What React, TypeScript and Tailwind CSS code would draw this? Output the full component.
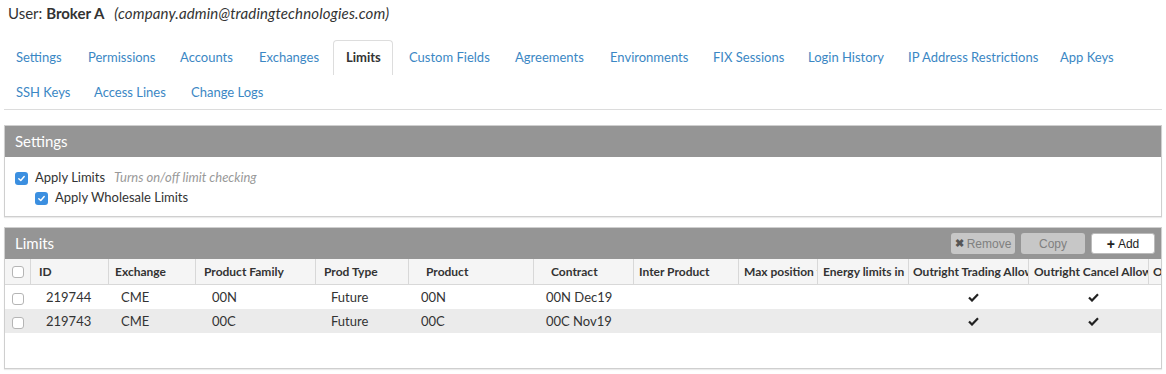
import React from "react";

const tabs1: [string, number][] = [
  ["Settings", 72], ["Permissions", 92], ["Accounts", 79], ["Exchanges", 86], ["Limits", 64],
  ["Custom Fields", 106], ["Agreements", 95], ["Environments", 103], ["FIX Sessions", 95],
  ["Login History", 100], ["IP Address Restrictions", 152], ["App Keys", 76],
];
const tabs2: [string, number][] = [["SSH Keys", 78], ["Access Lines", 97], ["Change Logs", 100]];

const cols: { label: string; w: number; pl: number }[] = [
  { label: "ID", w: 78, pl: 8 },
  { label: "Exchange", w: 87, pl: 6 },
  { label: "Product Family", w: 120, pl: 8 },
  { label: "Prod Type", w: 93, pl: 8 },
  { label: "Product", w: 125, pl: 17 },
  { label: "Contract", w: 100, pl: 17 },
  { label: "Inter Product", w: 105, pl: 5 },
  { label: "Max position f", w: 79, pl: 5 },
  { label: "Energy limits in", w: 91, pl: 5 },
  { label: "Outright Trading Allow", w: 120, pl: 4 },
  { label: "Outright Cancel Allow", w: 120, pl: 5 },
  { label: "O", w: 40, pl: 4 },
];

const rows = [
  ["219744","CME","00N","Future","00N","00N Dec19"],
  ["219743","CME","00C","Future","00C","00C Nov19"],
];
const rowPl = [15, 12, 16, 15, 12, 12];

function Check() {
  return (
    <span className="inline-flex h-[13px] w-[13px] items-center justify-center rounded-[3px] bg-[#3b8fe0]">
      <svg width="9" height="9" viewBox="0 0 10 10"><path d="M2 5.2 L4.2 7.3 L8 2.8" fill="none" stroke="white" strokeWidth="1.6" strokeLinecap="round" strokeLinejoin="round"/></svg>
    </span>
  );
}

function Box() {
  return <span className="inline-block h-[12px] w-[12px] rounded-[3px] border border-[#b5b5b5] bg-white" />;
}

function Tick() {
  return (
    <svg width="11" height="9" viewBox="0 0 11 9"><path d="M1 4.5 L4 7.5 L10 1.2" fill="none" stroke="#222" strokeWidth="2.2" /></svg>
  );
}

export default function App() {
  return (
    <div className="w-[1166px] h-[374px] bg-white text-[#333] overflow-hidden" style={{ fontFamily: "Lato, 'Noto Sans', sans-serif" }}>
      <div className="pl-[8px] pt-[3px] h-[28px] text-[15px] leading-[20px]">
        User: <span className="font-bold">Broker A</span>
        <span className="italic ml-[10px] tracking-[0.15px]">(company.admin@tradingtechnologies.com)</span>
      </div>
      <div className="mx-[4px] border-b border-[#dcdcdc] pt-[12px] text-[13px]">
        <div className="flex h-[35px]">
          {tabs1.map(([t, w]) => (
            <div key={t} className="shrink-0" style={{ width: w }}>
              {t === "Limits" ? (
                <div className="w-[60px] h-[35px] pl-[12px] leading-[33px] border border-b-0 border-[#dddddd] rounded-t-[4px] font-bold text-[#333]">{t}</div>
              ) : (
                <div className="pl-[12px] leading-[34px] text-[#3b87c4] whitespace-nowrap">{t}</div>
              )}
            </div>
          ))}
        </div>
        <div className="flex h-[34px]">
          {tabs2.map(([t, w]) => (
            <div key={t} className="shrink-0 pl-[12px] leading-[34px] text-[#3b87c4] whitespace-nowrap" style={{ width: w }}>{t}</div>
          ))}
        </div>
      </div>

      <div className="mx-[4px] mt-[15px] border border-[#cfcfcf] shadow-[0_1px_1px_rgba(0,0,0,0.08)]">
        <div className="h-[31px] bg-[#959595] text-white text-[15px] leading-[31px] pl-[10px]">Settings</div>
        <div className="pt-[11px] pb-[8px] text-[13px]">
          <div className="flex items-center pl-[10px] h-[20px]">
            <Check />
            <span className="ml-[7px]">Apply Limits</span>
            <span className="ml-[9px] italic text-[#999]">Turns on/off limit checking</span>
          </div>
          <div className="flex items-center pl-[30px] h-[20px]">
            <Check />
            <span className="ml-[7px]">Apply Wholesale Limits</span>
          </div>
        </div>
      </div>

      <div className="mx-[4px] mt-[10px] border border-[#cfcfcf] shadow-[0_1px_1px_rgba(0,0,0,0.08)] overflow-hidden">
        <div className="h-[31px] bg-[#959595] flex items-center justify-between pl-[10px] pr-[6px]">
          <span className="text-white text-[15px]">Limits</span>
          <div className="flex gap-[6px] text-[12px]" style={{ fontFamily: "'Liberation Sans', Arial, sans-serif" }}>
            <div className="w-[64px] h-[21px] rounded-[3px] bg-[#c7c7c7] text-[#808080] flex items-center justify-center gap-[3px]">
              <span className="font-bold text-[11px] text-[#555]">✖</span>Remove
            </div>
            <div className="w-[64px] h-[21px] rounded-[3px] bg-[#c7c7c7] text-[#808080] flex items-center justify-center">Copy</div>
            <div className="w-[64px] h-[21px] rounded-[3px] bg-white border border-[#bbb] text-[#222] flex items-center justify-center gap-[3px]">
              <span className="font-bold text-[14px] leading-none">+</span>Add
            </div>
          </div>
        </div>
        <div className="flex h-[26px] bg-[#f5f5f5] border-b border-[#d8d8d8] text-[12px] font-bold text-[#333] whitespace-nowrap">
          <div className="w-[26px] shrink-0 flex items-center justify-center border-r border-[#d8d8d8]"><Box /></div>
          {cols.map((c) => (
            <div key={c.label} className="shrink-0 overflow-hidden leading-[25px] border-r border-[#d8d8d8]" style={{ width: c.w, paddingLeft: c.pl }}>{c.label}</div>
          ))}
        </div>
        {rows.map((r, i) => (
          <div key={r[0]} className={"flex h-[24px] text-[13px] whitespace-nowrap " + (i === 1 ? "bg-[#ebebeb]" : "bg-white")}>
            <div className="w-[26px] shrink-0 flex items-center justify-center pt-[4px]"><Box /></div>
            {r.map((v, j) => (
              <div key={j} className="shrink-0 leading-[24px]" style={{ width: cols[j].w, paddingLeft: rowPl[j] }}>{v}</div>
            ))}
            <div className="shrink-0" style={{ width: 105 + 79 + 91 }} />
            <div className="shrink-0 w-[120px] flex items-center justify-center pl-[8px]"><Tick /></div>
            <div className="shrink-0 w-[120px] flex items-center justify-center pl-[8px]"><Tick /></div>
          </div>
        ))}
        <div className="h-[35px] bg-white" />
      </div>
    </div>
  );
}
